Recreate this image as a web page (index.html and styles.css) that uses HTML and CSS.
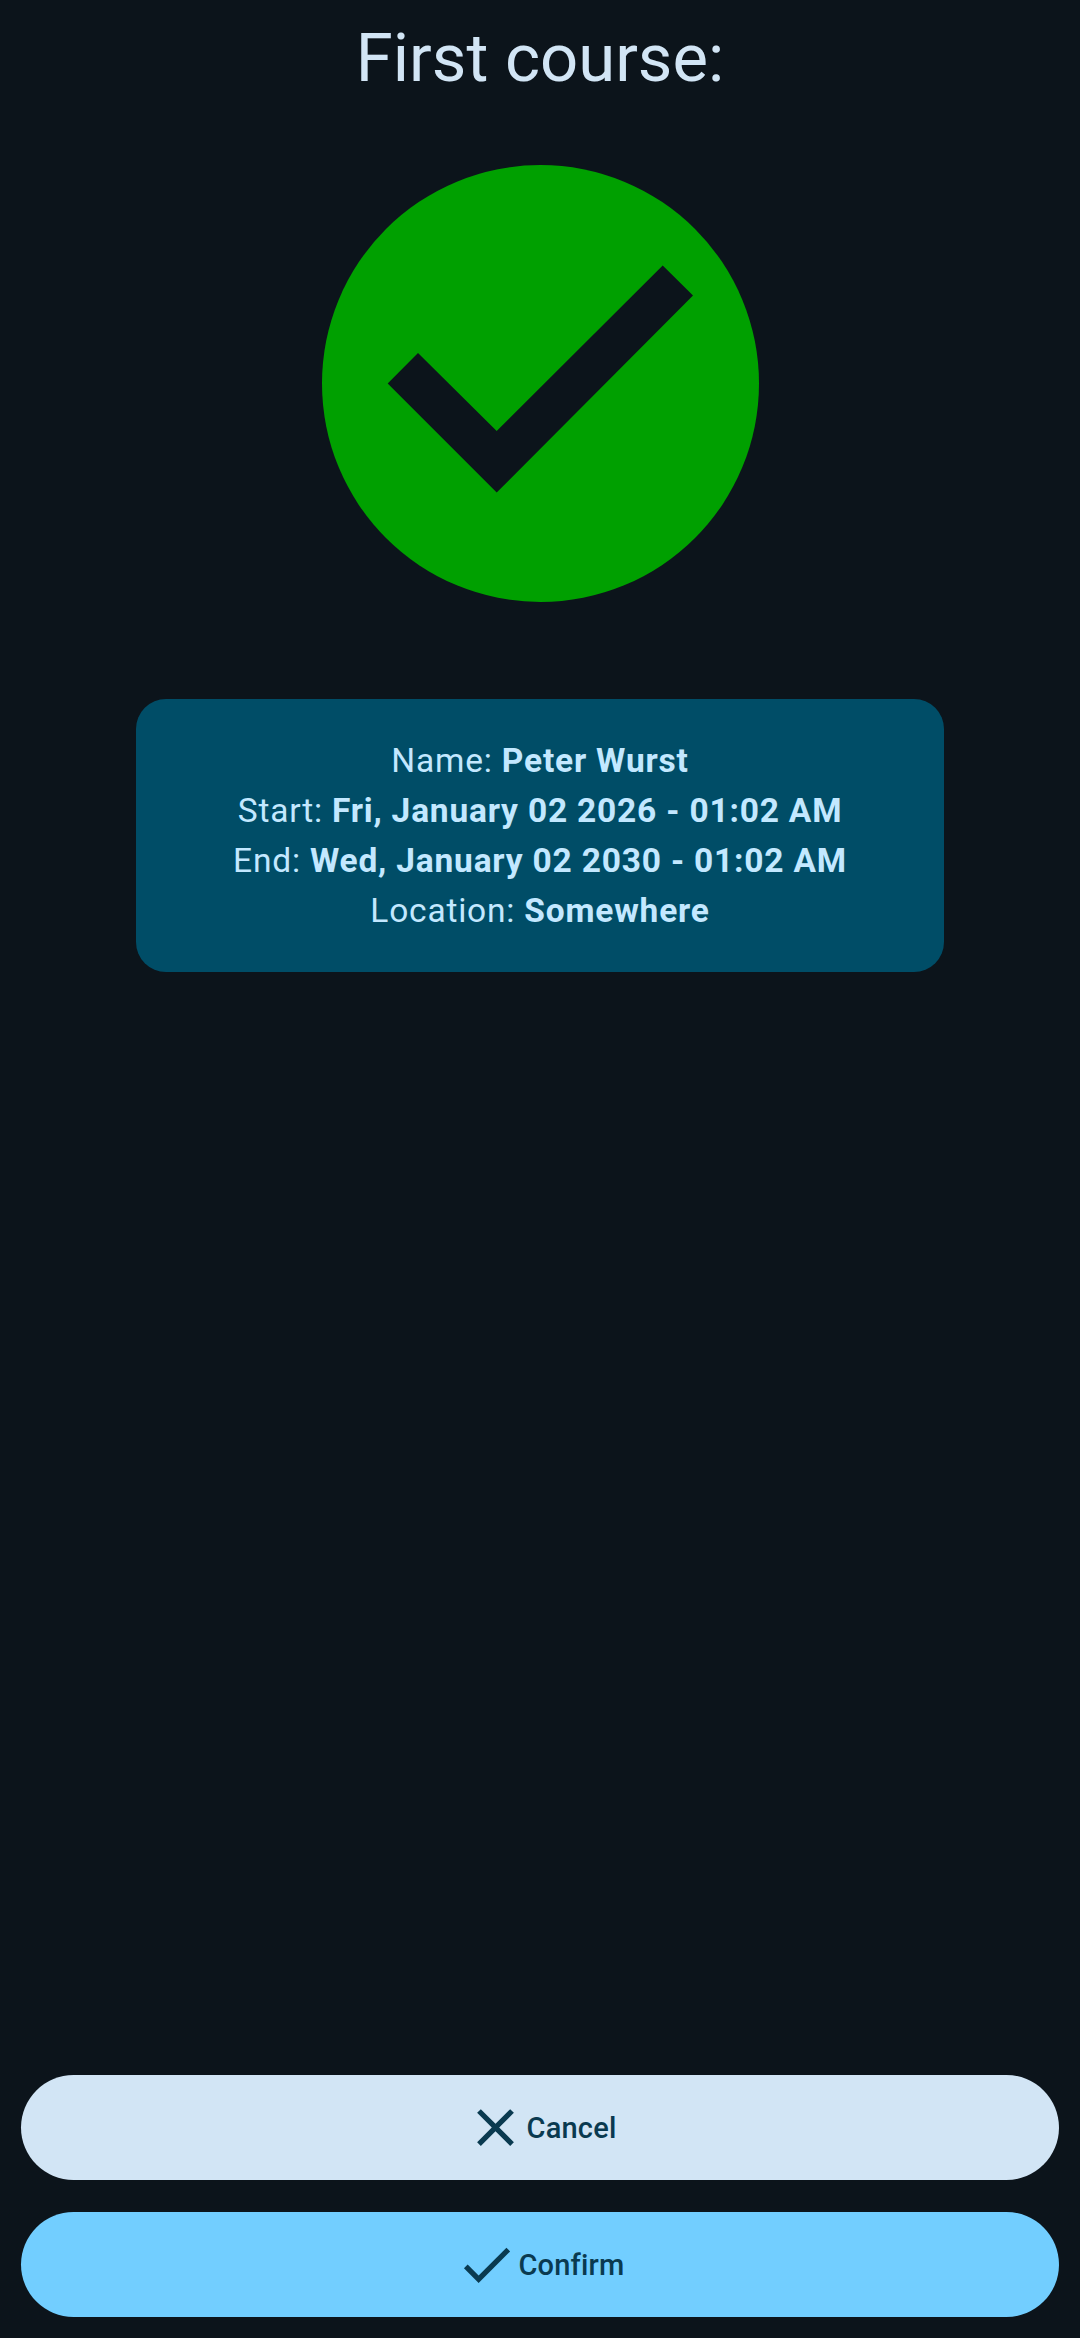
FILE: index.html
```html
<!DOCTYPE html>
<html lang="en">
<head>
    <meta charset="UTF-8">
    <meta name="viewport" content="width=device-width, initial-scale=1.0">
    <title>First course</title>
    <link rel="stylesheet" href="styles.css">
</head>
<body>
    <main class="screen">
        <h1 class="title">First course:</h1>

        <svg class="status-icon" viewBox="0 0 437 437">
            <circle cx="218.5" cy="218.5" r="218.5" fill="#00a000"/>
            <polygon points="340.7,100.6 371,130.6 174.7,327.5 65.7,218.4 96,188 174.7,266" fill="#0c141b"/>
        </svg>

        <section class="info-card">
            <p>Name: <b>Peter Wurst</b></p>
            <p>Start: <b>Fri, January 02 2026 - 01:02 AM</b></p>
            <p>End: <b>Wed, January 02 2030 - 01:02 AM</b></p>
            <p>Location: <b>Somewhere</b></p>
        </section>

        <div class="actions">
            <button type="button" class="btn btn-cancel">
                <svg class="btn-icon" viewBox="0 0 24 24"><path d="M19 6.41L17.59 5 12 10.59 6.41 5 5 6.41 10.59 12 5 17.59 6.41 19 12 13.41 17.59 19 19 17.59 13.41 12z"/></svg>
                <span>Cancel</span>
            </button>
            <button type="button" class="btn btn-confirm">
                <svg class="btn-icon" viewBox="0 0 24 24"><path d="M9 16.17L4.83 12l-1.42 1.41L9 19 21 7l-1.41-1.41z"/></svg>
                <span>Confirm</span>
            </button>
        </div>
    </main>
</body>
</html>
```

FILE: styles.css
```css
* {
    box-sizing: border-box;
}

body {
    margin: 0;
    background-color: #0c141b;
    font-family: Roboto, "Noto Sans", sans-serif;
}

.screen {
    display: flex;
    flex-direction: column;
    align-items: center;
    height: 2338px;
    padding: 0 21px 21px;
}

.title {
    margin: 21px 0 0;
    font-size: 67px;
    line-height: 74px;
    font-weight: 400;
    color: #d2e5f5;
}

.status-icon {
    display: block;
    width: 437px;
    height: 437px;
    margin-top: 70px;
}

.info-card {
    width: 808px;
    height: 273px;
    margin-top: 97px;
    padding: 37px 0 36px;
    border-radius: 30px;
    background-color: #004d67;
    color: #c3e8ff;
    text-align: center;
    font-size: 33.5px;
    line-height: 50px;
    font-weight: 400;
    letter-spacing: 0.8px;
}

.info-card p {
    margin: 0;
}

.info-card b {
    font-weight: 700;
}

.actions {
    display: flex;
    flex-direction: column;
    gap: 32px;
    width: 100%;
    margin-top: auto;
}

.btn {
    display: flex;
    justify-content: center;
    align-items: center;
    width: 100%;
    height: 105px;
    padding: 0;
    border: none;
    border-radius: 53px;
    color: #0a3a50;
    font-family: inherit;
    font-size: 29px;
    font-weight: 500;
    letter-spacing: 0.2px;
}

.btn-cancel {
    background-color: #d2e5f5;
}

.btn-confirm {
    background-color: #72ceff;
}

.btn-icon {
    width: 63px;
    height: 63px;
    fill: currentColor;
}
```
